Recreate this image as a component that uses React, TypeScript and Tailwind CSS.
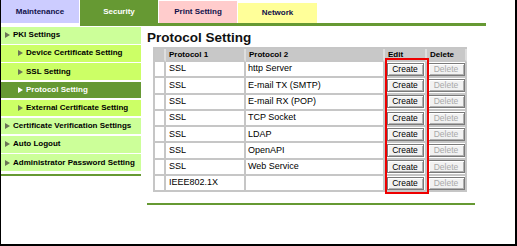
import React from 'react';

const menu = [
  { label: 'PKI Settings', level: 0 },
  { label: 'Device Certificate Setting', level: 1 },
  { label: 'SSL Setting', level: 1 },
  { label: 'Protocol Setting', level: 1, active: true },
  { label: 'External Certificate Setting', level: 1 },
  { label: 'Certificate Verification Settings', level: 0 },
  { label: 'Auto Logout', level: 0 },
  { label: 'Administrator Password Setting', level: 0 },
];

const rows = [
  ['SSL', 'http Server'],
  ['SSL', 'E-mail TX (SMTP)'],
  ['SSL', 'E-mail RX (POP)'],
  ['SSL', 'TCP Socket'],
  ['SSL', 'LDAP'],
  ['SSL', 'OpenAPI'],
  ['SSL', 'Web Service'],
  ['IEEE802.1X', ''],
];

const Arrow = ({ white }: { white?: boolean }) => (
  <svg width="5" height="6" viewBox="0 0 5 6" className="shrink-0">
    <path d="M0 0 L5 3 L0 6 Z" fill={white ? '#ffffff' : '#6b7556'} />
  </svg>
);

const Btn = ({ label, disabled }: { label: string; disabled?: boolean }) => (
  <div
    className={`w-[37px] h-[13px] flex items-center justify-center text-[8.5px] leading-none bg-[#f2f2f2] border border-[#7a7a7a] shadow-[inset_1px_1px_0_#ffffff,inset_-1px_-1px_0_#b0b0b0] ${
      disabled ? 'text-[#a8a8a8]' : 'text-black'
    }`}
  >
    {label}
  </div>
);

export default function App() {
  const cell = 'border-r-2 border-b-2 border-[#c6c6c6]';
  const head = 'border-r-2 border-b-2 border-r-[#dedede] border-b-[#c6c6c6] h-[13px] bg-[#c8c8c8] pl-[3px] font-bold text-[8px] flex items-center';
  return (
    <div className="w-[517px] h-[246px] bg-white border-l border-r-2 border-b-2 border-black overflow-hidden font-['Liberation_Sans',Arial,sans-serif]">
      {/* Tabs */}
      <div className="flex h-[26px]">
        <div className="w-[78px] h-[23px] bg-[#ccccff] text-[#10104a] flex items-center justify-center text-[8px] font-bold pt-[1px]">
          Maintenance
        </div>
        <div className="ml-[1px] w-[406px] flex flex-col">
          <div className="flex items-end gap-[1px] h-[23px]">
            <div className="w-[78px] h-[23px] bg-[#669933] text-white flex items-center justify-center text-[8px] font-bold pt-[1px]">
              Security
            </div>
            <div className="w-[78px] h-[22px] bg-[#ffcccc] text-[#10104a] flex items-center justify-center text-[8px] font-bold">
              Print Setting
            </div>
            <div className="w-[79px] h-[20px] bg-[#ffff99] text-[#10104a] flex items-center justify-center text-[8px] font-bold">
              Network
            </div>
          </div>
          <div className="h-[3px] bg-[#669933]" />
        </div>
      </div>

      <div className="flex">
        {/* Sidebar */}
        <div className="w-[140px] flex flex-col pt-[1px]">
          <div className="flex flex-col gap-[1.7px]">
            {menu.map(m => (
              <div
                key={m.label}
                className={`h-[16.5px] flex items-center gap-[3px] text-[8px] font-bold ${
                  m.level ? 'pl-[17px]' : 'pl-[4px]'
                } ${m.active ? 'bg-[#669933] text-white' : m.level ? 'bg-[#ccff66] text-black' : 'bg-[#ccff99] text-black'}`}
              >
                <Arrow white={m.active} />
                <span>{m.label}</span>
              </div>
            ))}
          </div>
          <div className="mt-[3px] h-[2px] bg-[#669933]" />
        </div>

        {/* Content */}
        <div className="flex-1 pl-[6px]">
          <h1 className="mt-[4px] text-[13.5px] leading-[15px] font-bold text-[#111]">Protocol Setting</h1>

          <div className="relative ml-[6px] mt-[2px] w-[314px]">
            <div className="grid grid-cols-[11px_80px_139px_42px_40px] border-t-2 border-l-2 border-[#c6c6c6] text-[9px] text-black">
              <div className={head} />
              <div className={head}>Protocol 1</div>
              <div className={head}>Protocol 2</div>
              <div className={head}>Edit</div>
              <div className={`${head} border-r-[#c6c6c6]`}>Delete</div>

              {rows.map((r, i) => (
                <React.Fragment key={i}>
                  <div className={`${cell} h-[16.3px]`} />
                  <div className={`${cell} h-[16.3px] pl-[3px] flex items-center`}>{r[0]}</div>
                  <div className={`${cell} h-[16.3px] pl-[2px] flex items-center`}>{r[1]}</div>
                  <div className={`${cell} h-[16.3px] flex items-center justify-center`}>
                    <Btn label="Create" />
                  </div>
                  <div className={`${cell} h-[16.3px] flex items-center justify-center`}>
                    <Btn label="Delete" disabled />
                  </div>
                </React.Fragment>
              ))}
            </div>

            {/* highlight */}
            <div className="absolute left-[232px] top-[11px] w-[44px] h-[136px] border-2 border-[#ee0000]" />
          </div>

          <div className="mt-[11px] h-[2px] w-[328px] bg-[#669933]" />
        </div>
      </div>
    </div>
  );
}
